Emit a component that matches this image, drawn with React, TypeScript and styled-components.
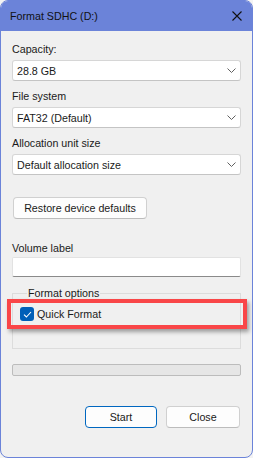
import styled, { createGlobalStyle } from 'styled-components';
import { FC } from 'react';

const GlobalStyle = createGlobalStyle`
  html, body {
    margin: 0;
    padding: 0;
    background: #f3f3f3;
  }
  * {
    box-sizing: border-box;
  }
`;

const Window = styled.div`
  width: 253px;
  height: 458px;
  border: 1px solid #6b83d9;
  border-radius: 8px;
  overflow: hidden;
  background: #f0f0f0;
  font-family: 'Liberation Sans', Arial, sans-serif;
  font-size: 10.7px;
  color: #1a1a1a;
  display: flex;
  flex-direction: column;
`;

const TitleBar = styled.div`
  height: 30px;
  flex: none;
  background: #6b83d9;
  display: flex;
  align-items: center;
  justify-content: space-between;
  padding: 0 10px 0 9px;
  color: #111;
`;

const Title = styled.span`
  line-height: 16px;
`;

const CloseIcon = styled.svg`
  width: 10px;
  height: 10px;
  display: block;
`;

const Body = styled.div`
  flex: 1;
  padding: 10px 11px 0 11px;
  display: flex;
  flex-direction: column;
`;

const Field = styled.div<{ $gap?: number }>`
  display: flex;
  flex-direction: column;
  margin-top: ${(p) => p.$gap ?? 0}px;
`;

const Label = styled.label<{ $space?: number }>`
  line-height: 16px;
  margin-bottom: ${(p) => p.$space ?? 3}px;
`;

const Combo = styled.div`
  height: 21px;
  background: #fff;
  border: 1px solid #d6d6d6;
  border-bottom-color: #c4c4c4;
  border-radius: 3px;
  display: flex;
  align-items: center;
  justify-content: space-between;
  padding: 0 4px 0 4px;
  line-height: 16px;
`;

const Chevron = styled.svg`
  width: 9px;
  height: 5px;
  display: block;
`;

const Button = styled.button<{ $primary?: boolean; $width: number }>`
  width: ${(p) => p.$width}px;
  height: 22px;
  background: #fdfdfd;
  border: 1px solid ${(p) => (p.$primary ? '#0067c0' : '#d0d0d0')};
  border-bottom-color: ${(p) => (p.$primary ? '#0067c0' : '#bcbcbc')};
  border-radius: 4px;
  font-family: inherit;
  font-size: inherit;
  color: #1a1a1a;
  padding: 0;
  line-height: 16px;
`;

const RestoreButton = styled(Button)`
  margin-left: 1px;
`;

const TextBox = styled.div`
  height: 20px;
  background: #fff;
  border: 1px solid #e2e2e2;
  border-bottom: 1px solid #8a8a8a;
  border-radius: 2px;
`;

const GroupWrap = styled.div`
  position: relative;
  margin-top: 8px;
`;

const Group = styled.fieldset`
  margin: 0;
  height: 64px;
  border: 1px solid #dcdcdc;
  border-radius: 0;
  padding: 5px 0 0 7px;
`;

const Legend = styled.legend`
  padding: 0 1px;
  margin-left: 7px;
  line-height: 16px;
`;

const CheckRow = styled.div`
  display: flex;
  align-items: center;
  gap: 3px;
  line-height: 16px;
`;

const CheckBox = styled.span`
  width: 14px;
  height: 14px;
  border-radius: 3px;
  background: #005fb8;
  display: flex;
  align-items: center;
  justify-content: center;
`;

const Highlight = styled.div`
  position: absolute;
  left: -5px;
  right: -6px;
  top: 14px;
  height: 30px;
  border: 4px solid #f94648;
  box-shadow: 2px 3px 4px rgba(0, 0, 0, 0.35);
  pointer-events: none;
`;

const Progress = styled.div`
  height: 12px;
  margin-top: 15px;
  background: #e6e6e6;
  border: 1px solid #bcbcbc;
  border-radius: 2px;
`;

const Footer = styled.div`
  margin-top: 30px;
  display: flex;
  justify-content: flex-end;
  gap: 9px;
  padding-right: 1px;
`;

const ComboBox: FC<{ value: string }> = ({ value }) => (
  <Combo>
    <span>{value}</span>
    <Chevron viewBox="0 0 9 5">
      <path d="M0.5 0.5 L4.5 4.5 L8.5 0.5" fill="none" stroke="#606060" strokeWidth="1" />
    </Chevron>
  </Combo>
);

export default function App() {
  return (
    <>
      <GlobalStyle />
      <Window>
        <TitleBar>
          <Title>Format SDHC (D:)</Title>
          <CloseIcon viewBox="0 0 10 10">
            <path d="M0.5 0.5 L9.5 9.5 M9.5 0.5 L0.5 9.5" stroke="#111" strokeWidth="1.1" />
          </CloseIcon>
        </TitleBar>
        <Body>
          <Field>
            <Label>Capacity:</Label>
            <ComboBox value="28.8 GB" />
          </Field>
          <Field $gap={7}>
            <Label>File system</Label>
            <ComboBox value="FAT32 (Default)" />
          </Field>
          <Field $gap={7}>
            <Label>Allocation unit size</Label>
            <ComboBox value="Default allocation size" />
          </Field>
          <Field $gap={22}>
            <RestoreButton $width={134}>Restore device defaults</RestoreButton>
          </Field>
          <Field $gap={21}>
            <Label $space={1}>Volume label</Label>
            <TextBox />
          </Field>
          <GroupWrap>
            <Group>
              <Legend>Format options</Legend>
              <CheckRow>
                <CheckBox>
                  <svg width="9" height="7" viewBox="0 0 9 7">
                    <path d="M1 3.6 L3.4 6 L8 1" fill="none" stroke="#fff" strokeWidth="1.1" />
                  </svg>
                </CheckBox>
                <span>Quick Format</span>
              </CheckRow>
            </Group>
            <Highlight />
          </GroupWrap>
          <Progress />
          <Footer>
            <Button $primary $width={72}>Start</Button>
            <Button $width={74}>Close</Button>
          </Footer>
        </Body>
      </Window>
    </>
  );
}
